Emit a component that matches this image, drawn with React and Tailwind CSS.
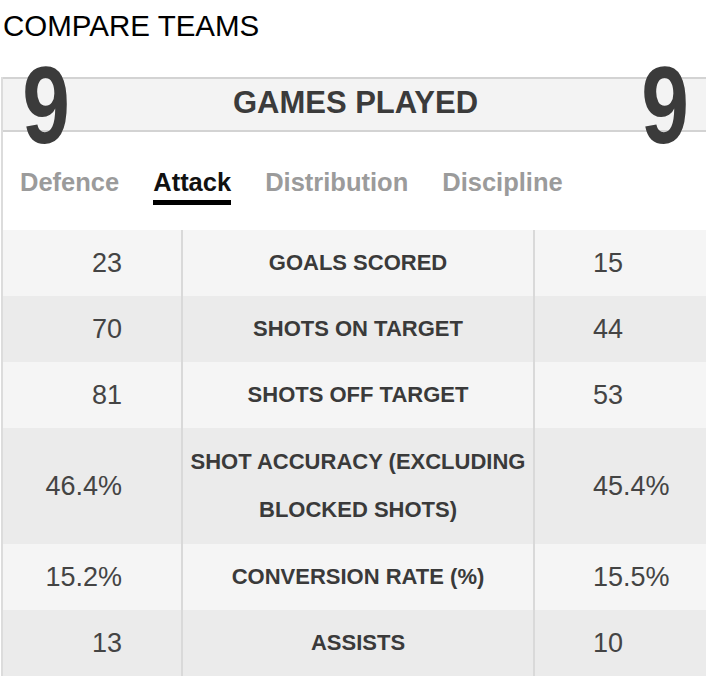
import React from "react";

const rows = [
  { l: "23", label: ["GOALS SCORED"], r: "15" },
  { l: "70", label: ["SHOTS ON TARGET"], r: "44" },
  { l: "81", label: ["SHOTS OFF TARGET"], r: "53" },
  { l: "46.4%", label: ["SHOT ACCURACY (EXCLUDING", "BLOCKED SHOTS)"], r: "45.4%" },
  { l: "15.2%", label: ["CONVERSION RATE (%)"], r: "15.5%" },
  { l: "13", label: ["ASSISTS"], r: "10" },
];

const tabs = ["Defence", "Attack", "Distribution", "Discipline"];

export default function App() {
  return (
    <div className="w-[706px] h-[676px] bg-white overflow-hidden font-['Liberation_Sans',Arial,sans-serif]">
      <div className="pt-[9px] pl-[3px] text-[29.5px] leading-[33px] text-black">COMPARE TEAMS</div>
      <div className="mt-[35px] ml-px border-l-2 border-[#dcdcdc]">
        <div className="h-[55px] border-y-2 border-[#d3d3d3] bg-[#f3f3f3] flex items-center">
          <span className="ml-[12px] w-[62px] shrink-0 text-center font-bold text-[110px] leading-none text-[#3b3b3b] scale-x-[0.78]">
            9
          </span>
          <div className="flex-1 text-center font-bold text-[31px] leading-[40px] text-[#3b3b3b] pb-[4px]">
            GAMES PLAYED
          </div>
          <span className="mr-[10px] w-[62px] shrink-0 text-center font-bold text-[110px] leading-none text-[#3b3b3b] scale-x-[0.78]">
            9
          </span>
        </div>
        <div className="pt-[35px] pl-[17px] flex items-start gap-[34px]">
          {tabs.map((t) => (
            <div key={t} className="flex flex-col">
              <span
                className={
                  "text-[25.5px] leading-[30px] font-bold " +
                  (t === "Attack" ? "text-[#111111]" : "text-[#9b9b9b]")
                }
              >
                {t}
              </span>
              {t === "Attack" && <div className="mt-[3px] h-[5px] bg-black" />}
            </div>
          ))}
        </div>
        <div className="mt-[25px]">
          {rows.map((row, i) => (
            <div
              key={i}
              className={
                "flex " +
                (row.label.length > 1 ? "h-[116px] " : "h-[66px] ") +
                (i % 2 === 0 ? "bg-[#f5f5f5]" : "bg-[#ebebeb]")
              }
            >
              <div className="w-[180px] shrink-0 border-r-2 border-[#d9d9d9] flex items-center justify-end pr-[59px] text-[27px] text-[#444444]">
                {row.l}
              </div>
              <div className="w-[352px] shrink-0 border-r-2 border-[#d9d9d9] flex flex-col items-center justify-center text-[22px] leading-[48px] font-bold text-[#3a3a3a]">
                {row.label.map((ln) => (
                  <span key={ln} className="whitespace-nowrap">{ln}</span>
                ))}
              </div>
              <div className="flex-1 flex items-center pl-[58px] text-[27px] text-[#444444]">
                {row.r}
              </div>
            </div>
          ))}
        </div>
      </div>
    </div>
  );
}
